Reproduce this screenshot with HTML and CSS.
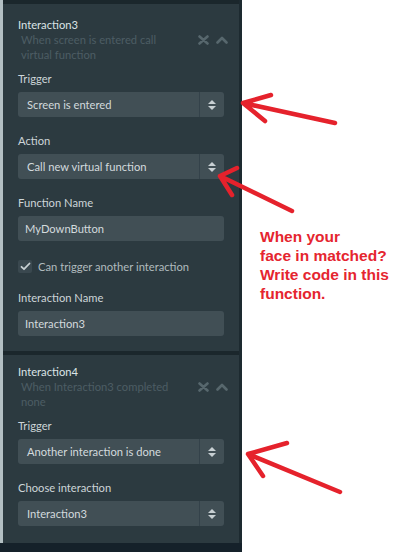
FILE: index.html
```html
<!DOCTYPE html>
<html lang="en">
  <head>
    <meta charset="UTF-8" />
    <meta name="viewport" content="width=device-width, initial-scale=1.0" />
    <title>Interactions</title>
    <link rel="stylesheet" href="styles.css">
  </head>
  <body>
    <div id="page">
      <div id="sidebar">
        <div class="panel">
          <div class="interaction first">
            <div class="head">
              <div class="head-text">
                <h2 class="name">Interaction3</h2>
                <p class="summary">When screen is entered call<br />virtual function</p>
              </div>
              <div class="head-icons">
                <svg width="11" height="10" viewBox="0 0 11 10"><path d="M1.5 1.5 9.5 8.5M9.5 1.5 1.5 8.5" stroke="#57676d" stroke-width="2.6" stroke-linecap="round" fill="none"/></svg>
                <svg width="12" height="8" viewBox="0 0 12 8"><path d="M1.5 6.5 6 2 10.5 6.5" stroke="#57676d" stroke-width="2.6" stroke-linecap="round" stroke-linejoin="round" fill="none"/></svg>
              </div>
            </div>

            <div class="field">
              <label>Trigger</label>
              <div class="select">
                <span class="value">Screen is entered</span>
                <span class="spin"><i class="up"></i><i class="down"></i></span>
              </div>
            </div>

            <div class="field">
              <label>Action</label>
              <div class="select">
                <span class="value">Call new virtual function</span>
                <span class="spin"><i class="up"></i><i class="down"></i></span>
              </div>
            </div>

            <div class="field">
              <label>Function Name</label>
              <div class="input">MyDownButton</div>
            </div>

            <div class="check">
              <span class="box">
                <svg width="11" height="9" viewBox="0 0 11 9"><path d="M1.5 4.8 4 7.2 9.5 1.5" stroke="#c9d1d4" stroke-width="1.8" stroke-linecap="round" stroke-linejoin="round" fill="none"/></svg>
              </span>
              <span>Can trigger another interaction</span>
            </div>

            <div class="field">
              <label>Interaction Name</label>
              <div class="input">Interaction3</div>
            </div>
          </div>

          <div class="interaction">
            <div class="head">
              <div class="head-text">
                <h2 class="name">Interaction4</h2>
                <p class="summary">When Interaction3 completed<br />none</p>
              </div>
              <div class="head-icons">
                <svg width="11" height="10" viewBox="0 0 11 10"><path d="M1.5 1.5 9.5 8.5M9.5 1.5 1.5 8.5" stroke="#57676d" stroke-width="2.6" stroke-linecap="round" fill="none"/></svg>
                <svg width="12" height="8" viewBox="0 0 12 8"><path d="M1.5 6.5 6 2 10.5 6.5" stroke="#57676d" stroke-width="2.6" stroke-linecap="round" stroke-linejoin="round" fill="none"/></svg>
              </div>
            </div>

            <div class="field">
              <label>Trigger</label>
              <div class="select">
                <span class="value">Another interaction is done</span>
                <span class="spin"><i class="up"></i><i class="down"></i></span>
              </div>
            </div>

            <div class="field">
              <label>Choose interaction</label>
              <div class="select">
                <span class="value">Interaction3</span>
                <span class="spin"><i class="up"></i><i class="down"></i></span>
              </div>
            </div>
          </div>
        </div>
        <div class="footer"></div>
      </div>

      <div id="notes">
        <p class="note">When your<br />face in matched?<br />Write code in this<br />function.</p>
      </div>
    </div>

    <svg id="arrows" width="406" height="552" viewBox="0 0 406 552">
      <g stroke="#e5222c" stroke-width="4.5" stroke-linecap="round" stroke-linejoin="round" fill="none">
        <path d="M335 123 243 103M271 95 243 103 265 121" />
        <path d="M292 211 220 176M237 168 220 176 232 195" />
        <path d="M340 492 248 454M287 443 248 454 263 476" />
      </g>
    </svg>
  </body>
</html>
```

FILE: styles.css
```css
* {
  box-sizing: border-box;
  margin: 0;
  padding: 0;
}

html,
body {
  height: 100%;
}

body {
  background-color: white;
  overflow: hidden;
  font-family: Lato, "Open Sans", sans-serif;
}

#page {
  display: flex;
  height: 100%;
}

#sidebar {
  width: 242px;
  display: flex;
  flex-direction: column;
}

.panel {
  background-color: #2c3a40;
  border-left: 3px solid #b3bfc3;
  border-right: 3px solid #1d2a30;
}

.footer {
  flex: 1;
  background-color: #15212a;
}

.interaction {
  border-top: 4px solid #1b272c;
  padding: 10px 15px 17px;
}

.interaction.first {
  padding-top: 14px;
  padding-bottom: 15px;
}

.head {
  display: flex;
  justify-content: space-between;
  margin-bottom: 10px;
}

.name {
  font-size: 11.2px;
  font-weight: normal;
  line-height: 14px;
  color: #dbe3e6;
}

.summary {
  font-size: 11.2px;
  line-height: 15px;
  color: #4d5d64;
  padding-left: 3px;
}

.head-icons {
  display: flex;
  align-items: center;
  gap: 7px;
  height: 14px;
  margin-top: 15px;
  margin-right: -4px;
}

.field label {
  display: block;
  font-size: 11.2px;
  line-height: 14px;
  color: #cdd5d8;
  margin-bottom: 6px;
}

.field + .field {
  margin-top: 17px;
}

.check + .field {
  margin-top: 18px;
}

.select,
.input {
  height: 25px;
  background-color: #414f55;
  border-radius: 3px;
  font-size: 11.2px;
  color: #d3dadd;
  display: flex;
  align-items: center;
}

.input {
  padding-left: 7px;
}

.value {
  flex: 1;
  padding-left: 9px;
}

.spin {
  width: 25px;
  height: 100%;
  border-left: 1px solid #34424a;
  display: flex;
  flex-direction: column;
  align-items: center;
  justify-content: center;
  gap: 2px;
}

.spin i {
  width: 0;
  height: 0;
  border-left: 4px solid transparent;
  border-right: 4px solid transparent;
}

.spin .up {
  border-bottom: 4px solid #c8d0d3;
}

.spin .down {
  border-top: 4px solid #c8d0d3;
}

.check {
  margin-top: 18px;
  display: flex;
  align-items: center;
  gap: 6px;
  height: 14px;
  font-size: 11.2px;
  color: #b0babe;
}

.box {
  width: 14px;
  height: 13px;
  background-color: #3a484f;
  border-radius: 2px;
  display: flex;
  align-items: center;
  justify-content: center;
}

#notes {
  flex: 1;
  padding: 227px 0 0 18px;
}

.note {
  font-family: "Liberation Sans", Arial, sans-serif;
  font-weight: bold;
  font-size: 15.5px;
  line-height: 19px;
  color: #e5252f;
}

#arrows {
  position: absolute;
  left: 0;
  top: 0;
  pointer-events: none;
}
```
